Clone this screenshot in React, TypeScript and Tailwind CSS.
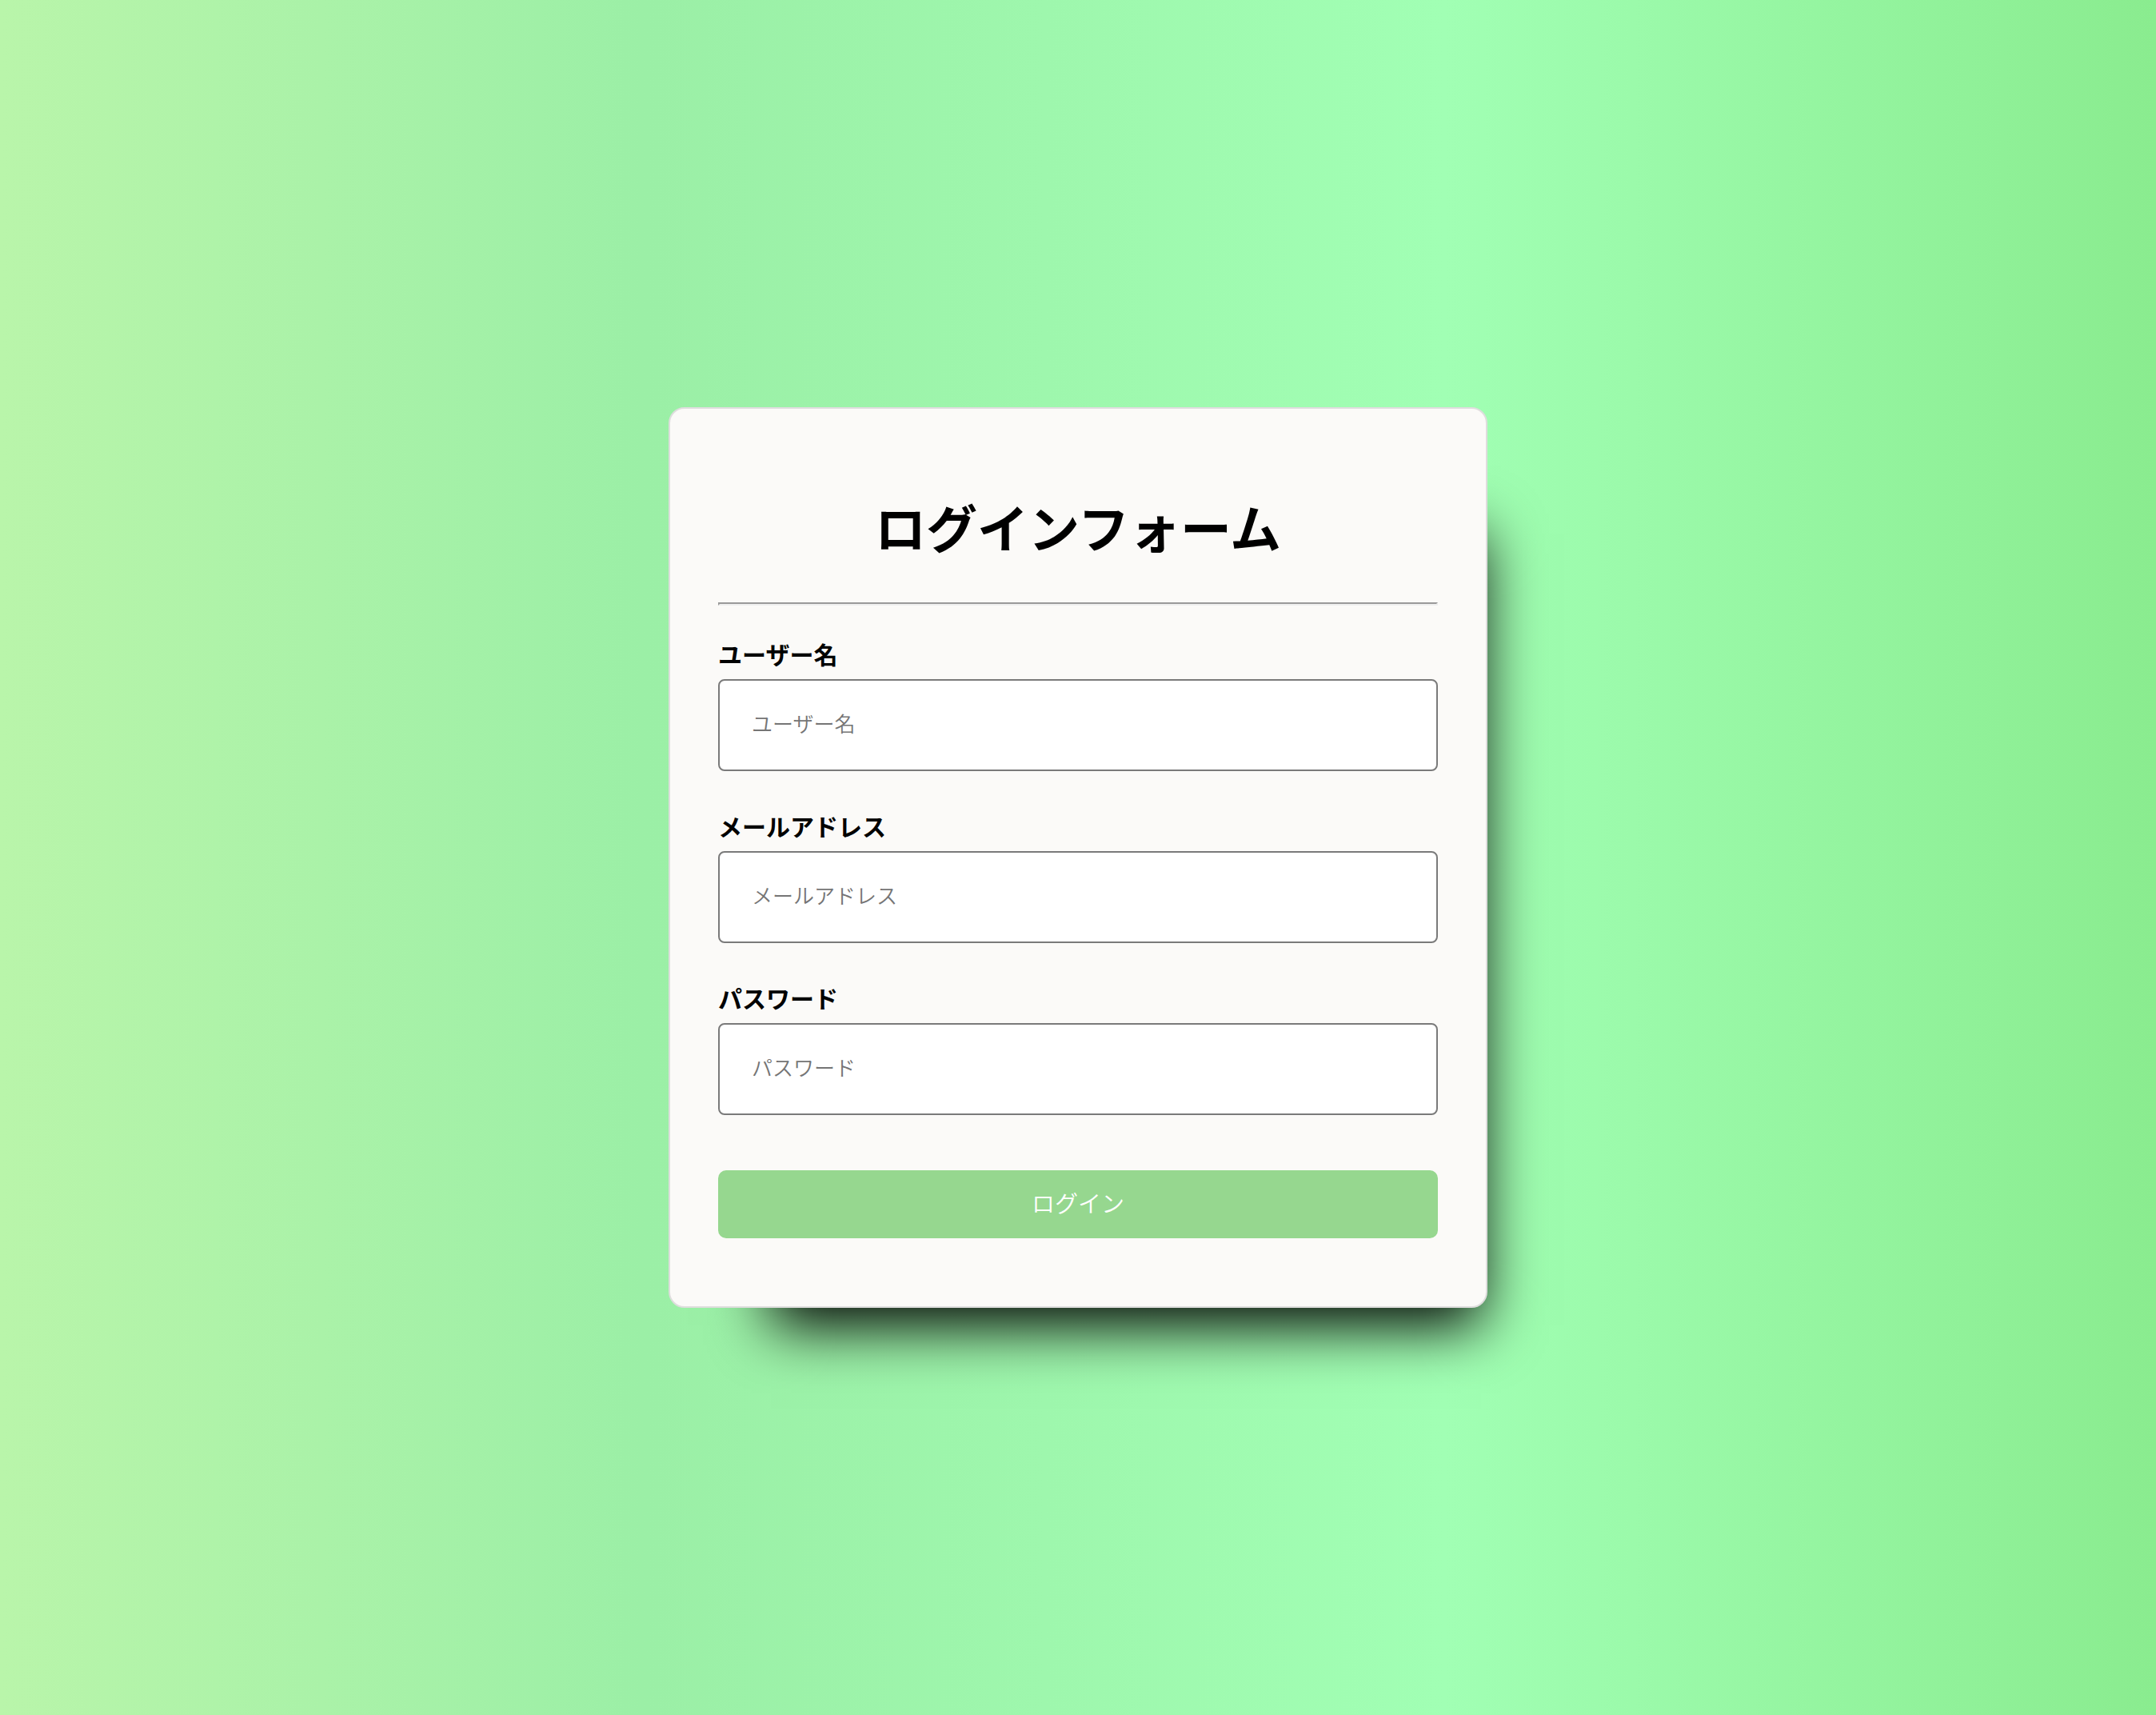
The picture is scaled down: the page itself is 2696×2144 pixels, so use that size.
import React from "react";

type Field = {
  id: string;
  label: string;
  type: string;
};

const fields: Field[] = [
  { id: "username", label: "ユーザー名", type: "text" },
  { id: "email", label: "メールアドレス", type: "email" },
  { id: "password", label: "パスワード", type: "password" },
];

function FormField({ id, label, type }: Field) {
  return (
    <div className="mb-10">
      <label htmlFor={id} className="mb-1 block text-[30px] leading-[56px] font-bold">
        {label}
      </label>
      <input
        id={id}
        name={id}
        type={type}
        placeholder={label}
        className="block h-[115px] w-full rounded-lg border-2 border-[#7a7a7a] bg-white px-10 pb-[6px] text-[26px] font-[350] placeholder:text-[#757575]"
      />
    </div>
  );
}

export default function App() {
  return (
    <main
      lang="ja"
      className="flex min-h-screen items-center justify-center bg-[linear-gradient(90deg,#b9f5aa_0%,#9befa6_30%,#a1ffb4_67%,#8aec8f_100%)] font-['Noto_Sans_CJK_JP',sans-serif] text-black"
    >
      <form
        className="w-full max-w-[1024px] rounded-[20px] border-2 border-[#dedddd] bg-[#fbfaf8] px-[60px] pt-[98px] pb-[85px] shadow-[60px_90px_70px_-68px_#000]"
        onSubmit={(event) => event.preventDefault()}
      >
        <h1 className="text-center text-[64px] leading-[96px] font-bold">ログインフォーム</h1>
        <hr className="mt-12 mb-8 h-1 border-2 border-t-[#9a9a9a] border-r-[#eeeeee] border-b-[#eeeeee] border-l-[#9a9a9a]" />
        {fields.map((field) => (
          <FormField key={field.id} {...field} />
        ))}
        <button
          type="submit"
          className="mt-[69px] block h-[85px] w-full rounded-[10px] bg-[#96d78f] pb-1 text-[29px] font-[350] text-white"
        >
          ログイン
        </button>
      </form>
    </main>
  );
}
